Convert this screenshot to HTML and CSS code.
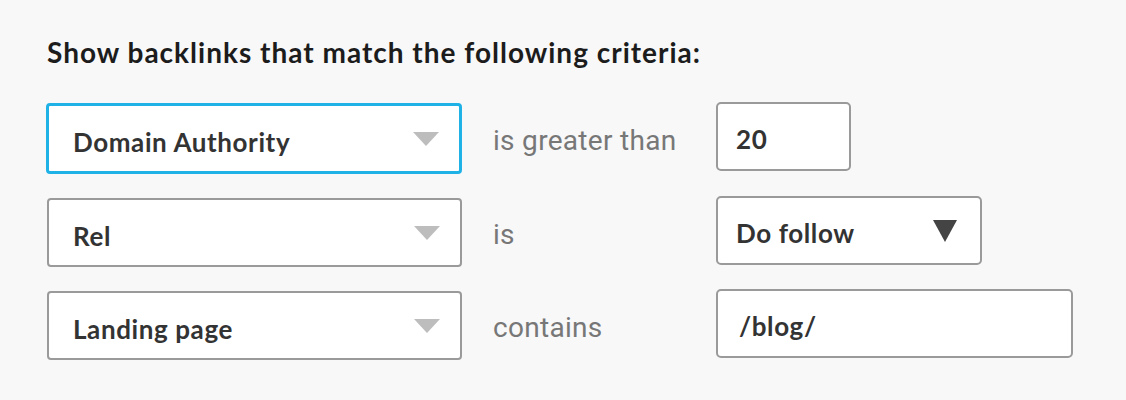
FILE: index.html
```html
<!DOCTYPE html>
<html>
<head>
<meta charset="utf-8">
<link rel="stylesheet" href="styles.css">
</head>
<body>
<div class="panel">
  <h2 class="title">Show backlinks that match the following criteria:</h2>
  <div class="rows">
    <div class="row">
      <div class="select focused"><span>Domain Authority</span><span class="caret"></span></div>
      <div class="label">is greater than</div>
      <div class="input short">20</div>
    </div>
    <div class="row">
      <div class="select"><span>Rel</span><span class="caret"></span></div>
      <div class="label">is</div>
      <div class="input dropdown"><span>Do follow</span><span class="caret-dark"></span></div>
    </div>
    <div class="row">
      <div class="select"><span>Landing page</span><span class="caret"></span></div>
      <div class="label">contains</div>
      <div class="input long">/blog/</div>
    </div>
  </div>
</div>
</body>
</html>
```

FILE: styles.css
```css
html, body {
  margin: 0;
  padding: 0;
  background: #f8f8f8;
}
.panel {
  padding: 36px 0 0 47px;
  font-family: "Lato", "Liberation Sans", sans-serif;
}
.title {
  margin: 0 0 34px 0;
  font-size: 28px;
  line-height: 32px;
  font-weight: 700;
  letter-spacing: 1px;
  color: #1c1c1c;
}
.rows {
  display: flex;
  flex-direction: column;
  gap: 22px;
}
.row {
  display: flex;
  align-items: flex-start;
}
.select {
  box-sizing: border-box;
  width: 415px;
  height: 69px;
  margin-top: 2px;
  border: 2px solid #9a9a9a;
  border-radius: 4px;
  background: #fff;
  display: flex;
  align-items: center;
  justify-content: space-between;
  padding: 6px 20px 0 24px;
  font-size: 26px;
  font-weight: 700;
  letter-spacing: 0.6px;
  color: #333;
}
.select.focused {
  width: 416px;
  height: 71px;
  margin-top: 1px;
  margin-left: -1px;
  border: 3px solid #1fb2e6;
}
.caret {
  width: 0;
  height: 0;
  border-left: 13px solid transparent;
  border-right: 13px solid transparent;
  border-top: 14px solid #bdbdbd;
  margin-top: -6px;
}
.label {
  width: 254px;
  padding: 6px 0 0 31px;
  box-sizing: border-box;
  height: 71px;
  display: flex;
  align-items: center;
  font-family: "Roboto", "Liberation Sans", sans-serif;
  font-weight: 400;
  font-size: 28px;
  letter-spacing: 0.3px;
  color: #777;
}
.input {
  box-sizing: border-box;
  height: 69px;
  border: 2px solid #9a9a9a;
  border-radius: 5px;
  background: #fff;
  display: flex;
  align-items: center;
  padding: 4px 18px 0 18px;
  font-size: 26px;
  font-weight: 700;
  letter-spacing: 0.6px;
  color: #333;
}
.input.short { width: 135px; }
.input.long { width: 357px; padding-left: 21px; }
.input.dropdown {
  width: 266px;
  justify-content: space-between;
  padding-right: 23px;
}
.caret-dark {
  width: 0;
  height: 0;
  border-left: 12px solid transparent;
  border-right: 12px solid transparent;
  border-top: 22px solid #444;
  margin-top: -4px;
}
```
